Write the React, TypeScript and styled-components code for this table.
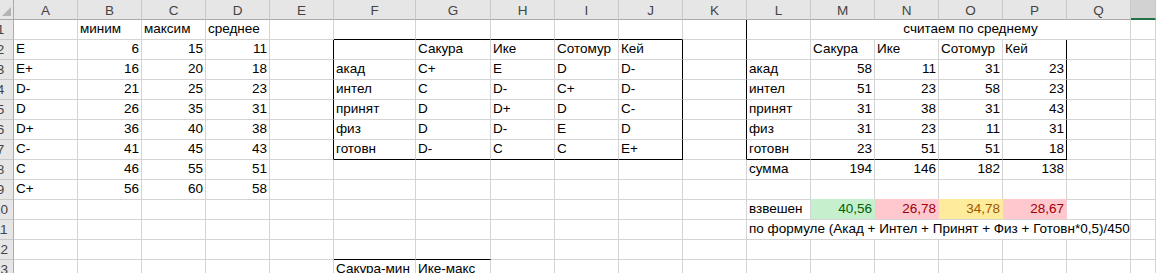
import styled, { createGlobalStyle } from 'styled-components';

const GlobalStyle = createGlobalStyle`
  html, body {
    margin: 0;
    padding: 0;
    background: #ffffff;
  }
  body {
    font-family: 'Liberation Sans', Arial, sans-serif;
  }
`;

type CellValue =
  | string
  | number
  | null
  | { v: string | number; span?: number; center?: boolean; fill?: 'good' | 'bad' | 'neutral'; right?: boolean };

const COLUMNS = ['A', 'B', 'C', 'D', 'E', 'F', 'G', 'H', 'I', 'J', 'K', 'L', 'M', 'N', 'O', 'P', 'Q', 'R'];
const WIDTHS = [64, 64, 64, 64, 64, 82, 75, 64, 64, 64, 64, 64, 64, 64, 64, 64, 64];

const GRID = '#d4d4d4';
const INK = '#000000';

const FILLS = {
  good: { bg: '#c6efce', ink: '#006100' },
  bad: { bg: '#ffc7ce', ink: '#9c0006' },
  neutral: { bg: '#ffeb9c', ink: '#9c5700' },
};

// column indexes
const E = 4, F = 5, G = 6, J = 9, K = 10, L = 11, P = 15;

const blank = (n: number): CellValue[] => Array.from({ length: n }, () => null);

const rows: CellValue[][] = [
  [null, 'миним', 'максим', 'среднее', null, ...blank(6), null, { v: 'считаем по среднему', span: 5, center: true }, null, null],
  ['E', 6, 15, 11, null, null, 'Сакура', 'Ике', 'Сотомур', 'Кей', null, null, 'Сакура', 'Ике', 'Сотомур', 'Кей', null, null],
  ['E+', 16, 20, 18, null, 'акад', 'C+', 'E', 'D', 'D-', null, 'акад', 58, 11, 31, 23, null, null],
  ['D-', 21, 25, 23, null, 'интел', 'C', 'D-', 'C+', 'D-', null, 'интел', 51, 23, 58, 23, null, null],
  ['D', 26, 35, 31, null, 'принят', 'D', 'D+', 'D', 'C-', null, 'принят', 31, 38, 31, 43, null, null],
  ['D+', 36, 40, 38, null, 'физ', 'D', 'D-', 'E', 'D', null, 'физ', 31, 23, 11, 31, null, null],
  ['C-', 41, 45, 43, null, 'готовн', 'D-', 'C', 'C', 'E+', null, 'готовн', 23, 51, 51, 18, null, null],
  ['C', 46, 55, 51, ...blank(7), 'сумма', 194, 146, 182, 138, null, null],
  ['C+', 56, 60, 58, ...blank(14)],
  [
    ...blank(11),
    'взвешен',
    { v: '40,56', fill: 'good', right: true },
    { v: '26,78', fill: 'bad', right: true },
    { v: '34,78', fill: 'neutral', right: true },
    { v: '28,67', fill: 'bad', right: true },
    null,
    null,
  ],
  [...blank(11), { v: 'по формуле (Акад + Интел + Принят + Физ + Готовн*0,5)/450', span: 6 }, null],
  blank(18),
  [...blank(5), 'Сакура-мин', 'Ике-макс', ...blank(11)],
];

// black outlines around the two grade tables and the pair in row 13
function darkRight(r: number, c: number) {
  if (r >= 2 && r <= 7 && (c === E || c === J)) return true;
  if (r >= 1 && r <= 7 && (c === K || c === P)) return true;
  return false;
}

function darkBottom(r: number, c: number) {
  if ((r === 1 || r === 7) && c >= F && c <= J) return true;
  if (r === 7 && c >= L && c <= P) return true;
  if (r === 12 && c >= F && c <= G) return true;
  return false;
}

const Sheet = styled.div`
  display: grid;
  grid-template-columns: 14px ${WIDTHS.map(w => `${w}px`).join(' ')} 1fr;
  grid-auto-rows: 20px;
  width: 1156px;
  height: 273px;
  overflow: hidden;
  font-size: 13.5px;
  color: ${INK};
`;

const Corner = styled.div`
  background: #e6e6e6;
  border-right: 1px solid #ababab;
  border-bottom: 1px solid #ababab;
  box-sizing: border-box;
  display: flex;
  align-items: flex-end;
  justify-content: flex-end;
  padding: 0 2px 3px 0;
`;

const ColHead = styled.div<{ $active?: boolean }>`
  box-sizing: border-box;
  background: ${p => (p.$active ? '#d2d2d2' : '#e6e6e6')};
  border-right: 1px solid #c8c8c8;
  border-bottom: ${p => (p.$active ? '2px solid #217346' : '1px solid #ababab')};
  color: #444444;
  display: flex;
  align-items: center;
  justify-content: center;
  padding-top: 1px;
`;

const RowHead = styled.div`
  box-sizing: border-box;
  background: #e6e6e6;
  border-right: 1px solid #ababab;
  border-bottom: 1px solid #c8c8c8;
  color: #444444;
  display: flex;
  align-items: flex-end;
  justify-content: flex-end;
  overflow: hidden;
  padding-bottom: 2px;

  span {
    flex: none;
    width: 25px;
    text-align: center;
  }
`;

const Cell = styled.div<{
  $span: number;
  $align: 'left' | 'right' | 'center';
  $right: string;
  $bottom: string;
  $bg?: string;
  $ink?: string;
}>`
  grid-column: span ${p => p.$span};
  box-sizing: border-box;
  border-right: 1px solid ${p => p.$right};
  border-bottom: 1px solid ${p => p.$bottom};
  background: ${p => p.$bg ?? 'transparent'};
  box-shadow: ${p => (p.$bg ? `0 -1px 0 ${p.$bg}` : 'none')};
  color: ${p => p.$ink ?? INK};
  display: flex;
  align-items: flex-end;
  justify-content: ${p => (p.$align === 'right' ? 'flex-end' : p.$align === 'center' ? 'center' : 'flex-start')};
  padding: 0 2px 2px 2px;
  white-space: nowrap;
  overflow: visible;
  line-height: 16px;
`;

function CornerMark() {
  return (
    <svg width="9" height="9" viewBox="0 0 9 9">
      <polygon points="9,0 9,9 0,9" fill="#b4b4b4" />
    </svg>
  );
}

export default function App() {
  return (
    <>
      <GlobalStyle />
      <Sheet>
        <Corner>
          <CornerMark />
        </Corner>
        {COLUMNS.map(col => (
          <ColHead key={col} $active={col === 'R'}>
            {col === 'R' ? '' : col}
          </ColHead>
        ))}
        {rows.map((row, ri) => {
          const r = ri + 1;
          const cells: React.ReactNode[] = [];
          let c = 0;
          while (c < COLUMNS.length) {
            const raw = row[c];
            const spec = raw !== null && typeof raw === 'object' ? raw : { v: raw };
            const span = 'span' in spec && spec.span ? spec.span : 1;
            const last = c + span - 1;
            const isNum = typeof spec.v === 'number' || ('right' in spec && spec.right);
            const align = 'center' in spec && spec.center ? 'center' : isNum ? 'right' : 'left';
            const fill = 'fill' in spec && spec.fill ? FILLS[spec.fill] : undefined;
            cells.push(
              <Cell
                key={c}
                $span={span}
                $align={align}
                $right={darkRight(r, last) ? INK : fill ? fill.bg : GRID}
                $bottom={darkBottom(r, c) ? INK : GRID}
                $bg={fill?.bg}
                $ink={fill?.ink}
              >
                {spec.v ?? ''}
              </Cell>,
            );
            c += span;
          }
          return [
            <RowHead key={`h${r}`}>
              <span>{r}</span>
            </RowHead>,
            ...cells,
          ];
        })}
      </Sheet>
    </>
  );
}
